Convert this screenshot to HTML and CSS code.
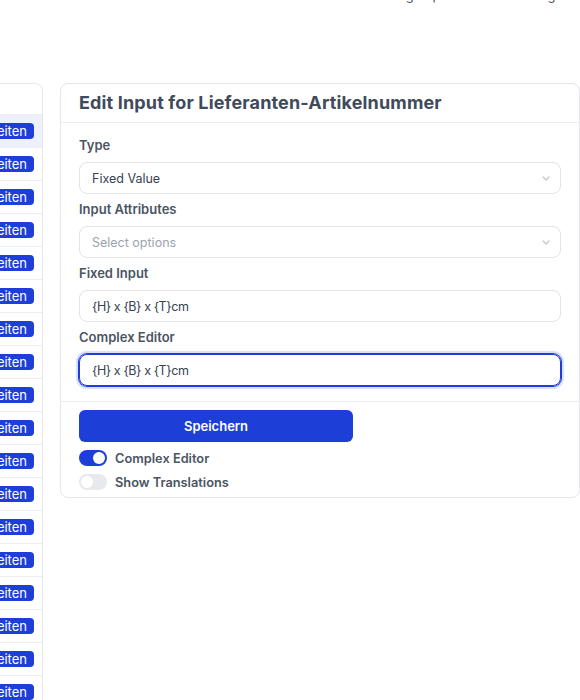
FILE: index.html
```html
<!DOCTYPE html>
<html lang="de">
<head>
<meta charset="utf-8">
<title>Edit Input</title>
<link rel="stylesheet" href="styles.css">
</head>
<body>
<div class="topbar"><span class="toptext">Einstellung Export</span><span class="toptext">Anmeldung</span></div>
<div class="layout">
  <aside class="list-panel">
    <div class="list-head"></div>
    <div class="row active"><span class="btn-small">Bearbeiten</span></div>
    <div class="row"><span class="btn-small">Bearbeiten</span></div>
    <div class="row"><span class="btn-small">Bearbeiten</span></div>
    <div class="row"><span class="btn-small">Bearbeiten</span></div>
    <div class="row"><span class="btn-small">Bearbeiten</span></div>
    <div class="row"><span class="btn-small">Bearbeiten</span></div>
    <div class="row"><span class="btn-small">Bearbeiten</span></div>
    <div class="row"><span class="btn-small">Bearbeiten</span></div>
    <div class="row"><span class="btn-small">Bearbeiten</span></div>
    <div class="row"><span class="btn-small">Bearbeiten</span></div>
    <div class="row"><span class="btn-small">Bearbeiten</span></div>
    <div class="row"><span class="btn-small">Bearbeiten</span></div>
    <div class="row"><span class="btn-small">Bearbeiten</span></div>
    <div class="row"><span class="btn-small">Bearbeiten</span></div>
    <div class="row"><span class="btn-small">Bearbeiten</span></div>
    <div class="row"><span class="btn-small">Bearbeiten</span></div>
    <div class="row"><span class="btn-small">Bearbeiten</span></div>
    <div class="row"><span class="btn-small">Bearbeiten</span></div>
  </aside>
  <section class="card">
    <header class="card-head"><h1 class="title">Edit Input for Lieferanten-Artikelnummer</h1></header>
    <div class="card-body">
      <div class="field">
        <label class="label">Type</label>
        <div class="control select"><span class="value">Fixed Value</span>
          <svg class="chev" width="8" height="5" viewBox="0 0 8 5"><path d="M1 1l3 3 3-3" fill="none" stroke="#c4c8cf" stroke-width="1.3" stroke-linecap="round" stroke-linejoin="round"/></svg>
        </div>
      </div>
      <div class="field">
        <label class="label">Input Attributes</label>
        <div class="control select"><span class="placeholder">Select options</span>
          <svg class="chev" width="8" height="5" viewBox="0 0 8 5"><path d="M1 1l3 3 3-3" fill="none" stroke="#c4c8cf" stroke-width="1.3" stroke-linecap="round" stroke-linejoin="round"/></svg>
        </div>
      </div>
      <div class="field">
        <label class="label">Fixed Input</label>
        <div class="control"><span class="value code">{H} x {B} x {T}cm</span></div>
      </div>
      <div class="field">
        <label class="label">Complex Editor</label>
        <div class="control focused"><span class="value code">{H} x {B} x {T}cm</span></div>
      </div>
    </div>
    <div class="card-foot">
      <button class="btn-primary">Speichern</button>
      <div class="toggle-row"><span class="toggle on"><span class="knob"></span></span><span class="toggle-label">Complex Editor</span></div>
      <div class="toggle-row"><span class="toggle"><span class="knob"></span></span><span class="toggle-label">Show Translations</span></div>
    </div>
  </section>
</div>
</body>
</html>
```
FILE: styles.css
```css
* { box-sizing: border-box; }
html, body { margin: 0; padding: 0; background: #fff; }
body {
  font-family: Inter, "Noto Sans", "Liberation Sans", sans-serif;
  color: #374151;
  width: 580px;
  height: 700px;
  overflow: hidden;
}
.topbar {
  height: 83px;
  display: flex;
  gap: 28px;
  padding-left: 347px;
}
.toptext {
  font-size: 13px;
  line-height: 16px;
  margin-top: -13px;
  color: #4b5563;
  height: 16px;
  white-space: nowrap;
}
.layout {
  display: flex;
  align-items: flex-start;
  gap: 17px;
}
.list-panel {
  width: 200px;
  margin-left: -157px;
  flex: none;
  border: 1px solid #e5e7eb;
  border-radius: 8px;
  overflow: hidden;
  background: #fff;
}
.list-head { height: 30px; }
.row {
  height: 33px;
  border-top: 1px solid #eceef1;
  display: flex;
  align-items: center;
  justify-content: flex-end;
  padding-right: 8px;
}
.row.active { background: #eef0fb; }
.btn-small {
  background: #1d3fd8;
  color: #fff;
  font-size: 13px;
  line-height: 16px;
  padding: 0 7px;
  border-radius: 4px;
}
.card {
  width: 520px;
  flex: none;
  border: 1px solid #e5e7eb;
  border-radius: 8px;
  background: #fff;
}
.card-head {
  padding: 5px 18px;
  border-bottom: 1px solid #e9ebee;
}
.title {
  margin: 0;
  font-size: 18px;
  line-height: 28px;
  font-weight: 700;
  letter-spacing: 0.15px;
  color: #404a5a;
}
.card-body {
  padding: 12px 18px 15px;
  border-bottom: 1px solid #e9ebee;
  display: flex;
  flex-direction: column;
  gap: 5px;
}
.field { display: flex; flex-direction: column; gap: 7px; }
.label {
  font-size: 13px;
  line-height: 20px;
  font-weight: 600;
  color: #4b5563;
}
.control {
  height: 32px;
  border: 1px solid #e2e4e8;
  border-radius: 8px;
  display: flex;
  align-items: center;
  padding: 0 12px;
  font-size: 12.5px;
}
.value { color: #374151; }
.value.code { letter-spacing: -0.4px; }
.placeholder { color: #9ca3af; }
.select { justify-content: space-between; }
.chev { margin-right: -2px; }
.focused {
  border-color: #1d3fd8;
  box-shadow: 0 0 0 1px #1d3fd8, 0 0 1px 3px rgba(79, 103, 226, 0.22);
}
.card-foot {
  padding: 8px 18px 7px;
  display: flex;
  flex-direction: column;
  gap: 8px;
}
.btn-primary {
  width: 274px;
  height: 32px;
  border: none;
  border-radius: 6px;
  background: #1d3fd8;
  color: #fff;
  font-family: inherit;
  font-size: 13px;
  font-weight: 600;
}
.toggle-row { display: flex; align-items: center; gap: 8px; height: 16px; }
.toggle {
  width: 28px;
  height: 16px;
  border-radius: 8px;
  background: #e8e9ec;
  display: flex;
  align-items: center;
  padding: 0 2px;
}
.toggle.on { background: #1d3fd8; justify-content: flex-end; }
.knob { width: 12px; height: 12px; border-radius: 50%; background: #fff; }
.toggle-label {
  font-size: 12.8px;
  font-weight: 600;
  color: #4b5563;
}
```
